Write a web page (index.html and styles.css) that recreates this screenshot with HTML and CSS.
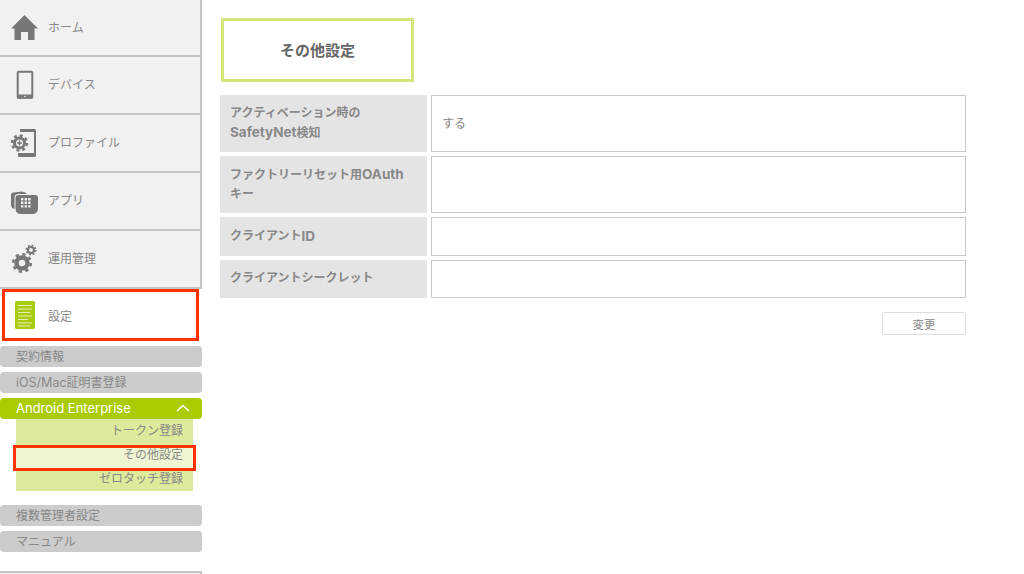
FILE: index.html
```html
<!DOCTYPE html>
<html lang="ja">
<head>
    <meta charset="UTF-8">
    <meta name="viewport" content="width=device-width, initial-scale=1.0">
    <title>その他設定</title>
    <link rel="stylesheet" href="styles.css">
</head>
<body>
    <div class="page">
        <div class="sidebar">
            <div class="main-menu">
                <div class="menu-item first">
                    <span class="menu-icon">
                        <svg width="30" height="30" viewBox="0 0 30 30"><path d="M14.500 2 L28 15.500 H24.500 V27 H18 V19 H11 V27 H4.500 V15.500 H1 Z" fill="#777"/></svg>
                    </span>
                    <span class="menu-label">ホーム</span>
                </div>
                <div class="menu-item">
                    <span class="menu-icon">
                        <svg width="30" height="30" viewBox="0 0 30 30"><rect x="7.700" y="1.700" width="14.600" height="26" rx="1" fill="none" stroke="#777" stroke-width="2"/><rect x="7" y="24.500" width="16" height="4" fill="#777"/><circle cx="15" cy="26.500" r="0.800" fill="#f1f1f1"/></svg>
                    </span>
                    <span class="menu-label">デバイス</span>
                </div>
                <div class="menu-item">
                    <span class="menu-icon">
                        <svg width="30" height="30" viewBox="0 0 30 30"><path d="M10 1 H24.500 A1.500 1.500 0 0 1 26 2.500 V27.500 A1.500 1.500 0 0 1 24.500 29 H9.500 A1.500 1.500 0 0 1 8 27.500 V25 H24 V4 H10 Z" fill="#777"/><circle cx="9.500" cy="15" r="5" fill="none" stroke="#777" stroke-width="3"/><circle cx="9.500" cy="15" r="7.500" fill="none" stroke="#777" stroke-width="2.500" stroke-dasharray="3 2.890"/><path d="M7 15 H12 M9.500 12.500 V17.500" stroke="#777" stroke-width="1.500"/></svg>
                    </span>
                    <span class="menu-label">プロファイル</span>
                </div>
                <div class="menu-item">
                    <span class="menu-icon">
                        <svg width="30" height="30" viewBox="0 0 30 30"><path d="M1 9 Q1 6.500 3.500 6.500 L12 5.500 Q15 5.500 17 8 H8 Q4.500 8 4.500 12 V23 Q1 22 1 19 Z" fill="#777"/><path d="M5.500 12 Q5.500 9 8.500 9 H25 Q28 9 28 12 V22 Q28 28 22 28 H11 Q5.500 28 5.500 22 Z" fill="#777"/><path d="M11 12 h2.400 v2.400 h-2.400 z M14.600 12 h2.400 v2.400 h-2.400 z M18.200 12 h2.400 v2.400 h-2.400 z M11 15.600 h2.400 v2.400 h-2.400 z M14.600 15.600 h2.400 v2.400 h-2.400 z M18.200 15.600 h2.400 v2.400 h-2.400 z M11 19.200 h2.400 v2.400 h-2.400 z M14.600 19.200 h2.400 v2.400 h-2.400 z M18.200 19.200 h2.400 v2.400 h-2.400 z" fill="#f1f1f1"/></svg>
                    </span>
                    <span class="menu-label">アプリ</span>
                </div>
                <div class="menu-item">
                    <span class="menu-icon">
                        <svg width="30" height="30" viewBox="0 0 30 30"><circle cx="12" cy="19" r="5.500" fill="none" stroke="#777" stroke-width="4.500"/><circle cx="12" cy="19" r="8.800" fill="none" stroke="#777" stroke-width="2.500" stroke-dasharray="3.300 3.610"/><circle cx="21" cy="6" r="3" fill="none" stroke="#777" stroke-width="2.200"/><circle cx="21" cy="6" r="4.700" fill="none" stroke="#777" stroke-width="1.600" stroke-dasharray="1.800 1.890"/></svg>
                    </span>
                    <span class="menu-label">運用管理</span>
                </div>
            </div>

            <div class="menu-item selected">
                <span class="menu-icon">
                    <svg width="30" height="30" viewBox="0 0 30 30"><rect x="5" y="1" width="20" height="28" rx="1.500" fill="#a9cb12"/><path d="M8 5.500 H22 M8 9 H22 M8 12.500 H20 M8 16 H22 M8 19.500 H18 M8 23 H22 M8 26 H20" stroke="#e6efb5" stroke-width="1.200"/></svg>
                </span>
                設定
            </div>

            <div class="sub-menu">
                <div class="sub-item">契約情報</div>
                <div class="sub-item"><span class="latin-sub">iOS/Mac</span>証明書登録</div>
                <div class="sub-item active">
                    Android Enterprise
                    <svg class="chevron" width="14" height="8" viewBox="0 0 14 8"><path d="M1 7 L7 1.500 L13 7" fill="none" stroke="#fff" stroke-width="1.600"/></svg>
                </div>
                <div class="child-list">
                    <div class="child-item">トークン登録</div>
                    <div class="child-item current">その他設定</div>
                    <div class="child-item">ゼロタッチ登録</div>
                </div>
                <div class="sub-item">複数管理者設定</div>
                <div class="sub-item">マニュアル</div>
            </div>
            <div class="sidebar-end"></div>
        </div>

        <div class="content">
            <div class="page-title">その他設定</div>

            <div class="form-row tall">
                <div class="form-label"><div>アクティベーション時の<br><span class="latin">SafetyNet</span>検知</div></div>
                <div class="form-value"><span class="value-text">する</span></div>
            </div>
            <div class="form-row tall">
                <div class="form-label"><div>ファクトリーリセット用<span class="latin">OAuth</span><br>キー</div></div>
                <div class="form-value"></div>
            </div>
            <div class="form-row">
                <div class="form-label">クライアント<span class="latin">ID</span></div>
                <div class="form-value"></div>
            </div>
            <div class="form-row">
                <div class="form-label">クライアントシークレット</div>
                <div class="form-value"></div>
            </div>

            <div class="form-buttons">
                <button class="change-btn">変更</button>
            </div>
        </div>
    </div>
</body>
</html>
```

FILE: styles.css
```css
* {
    box-sizing: border-box;
}
html, body {
    height: 100%;
}
body {
    margin: 0;
    background: white;
    color: #888;
    font-family: Inter, "Noto Sans CJK JP", sans-serif;
    font-size: 12px;
    overflow: hidden;
}
.page {
    display: flex;
    height: 574px;
    overflow: hidden;
}
.sidebar {
    width: 202px;
    flex-shrink: 0;
}
.main-menu {
    width: 202px;
    border-right: 2px solid #c4c4c4;
    border-bottom: 2px solid #c4c4c4;
}
.menu-item {
    display: flex;
    align-items: center;
    height: 58px;
    padding-left: 10px;
    background: #f1f1f1;
    border-top: 2px solid #c4c4c4;
}
.menu-item.first {
    height: 55px;
    border-top: none;
}
.menu-icon {
    display: flex;
    width: 30px;
    height: 30px;
    margin-right: 8px;
    align-items: center;
    justify-content: center;
}
.menu-label {
    margin-bottom: 3px;
}
.menu-item.selected {
    width: 197px;
    height: 52px;
    margin: 0 0 5px 2px;
    padding-left: 5px;
    background: white;
    border: 3px solid #ff3300;
}
.sub-item {
    position: relative;
    width: 202px;
    height: 21px;
    margin-bottom: 5px;
    padding-left: 16px;
    background: #cccccc;
    border-radius: 4px;
    line-height: 21px;
}
.sub-item.active {
    margin-bottom: 0;
    background: #a9cb00;
    color: white;
    font-size: 13px;
}
.latin-sub {
    font-size: 12.500px;
}
.chevron {
    position: absolute;
    right: 12px;
    top: 6px;
}
.child-list {
    width: 177px;
    margin: 0 0 14px 16px;
    background: #dde99b;
}
.child-item {
    position: relative;
    height: 24px;
    padding-right: 10px;
    line-height: 24px;
    text-align: right;
}
.child-item.current {
    z-index: 0;
}
.child-item.current::after {
    content: "";
    position: absolute;
    z-index: -1;
    top: 2px;
    left: -3px;
    right: -3px;
    bottom: -4px;
    background: #eff5d2;
    border: 3px solid #ff3300;
}
.sidebar-end {
    width: 202px;
    height: 4px;
    margin-top: 19px;
    background: #f1f1f1;
    border-top: 2px solid #c4c4c4;
    border-right: 2px solid #c4c4c4;
}
.content {
    width: 746px;
    margin-left: 18px;
    padding-top: 18px;
}
.page-title {
    width: 193px;
    height: 64px;
    margin: 0 0 13px 1px;
    border: 3px solid #d4e57c;
    font-size: 15px;
    font-weight: bold;
    line-height: 60px;
    text-align: center;
    color: #666;
}
.form-row {
    display: flex;
    gap: 4px;
    height: 38.500px;
    margin-bottom: 4px;
}
.form-row.tall {
    height: 57px;
}
.form-label {
    display: flex;
    align-items: center;
    width: 207px;
    padding: 0 0 1px 10px;
    background: #e4e4e4;
    line-height: 18.500px;
    font-weight: bold;
}
.latin {
    font-size: 13.500px;
}
.form-value {
    display: flex;
    flex: 1;
    align-items: center;
    padding-left: 10px;
    border: 1px solid #c8c8c8;
}
.value-text {
    margin-bottom: 2px;
}
.form-buttons {
    display: flex;
    justify-content: flex-end;
    margin-top: 14px;
}
.change-btn {
    width: 84px;
    height: 23px;
    padding: 0;
    background: white;
    border: 1px solid #dedede;
    border-radius: 2px;
    color: #888;
    font-family: inherit;
    font-size: 11.500px;
}
```
